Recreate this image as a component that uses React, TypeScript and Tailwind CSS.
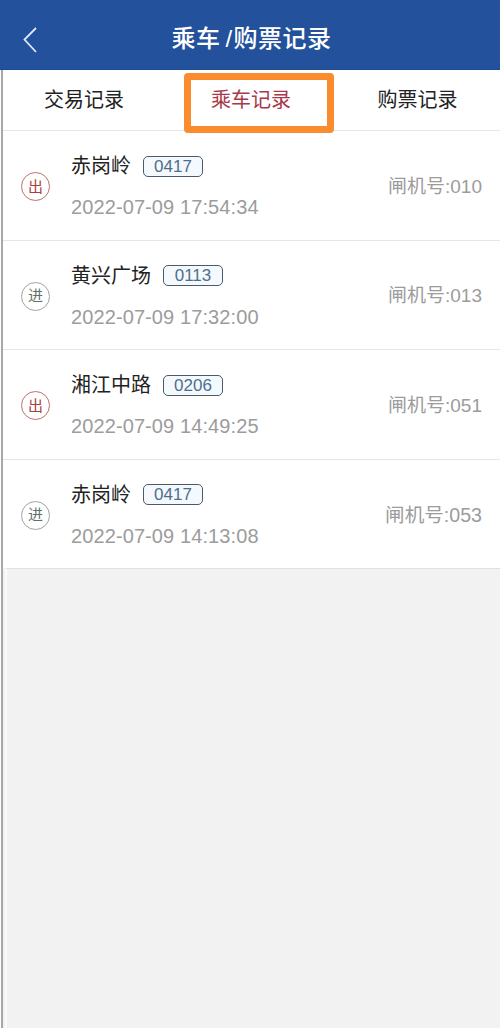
const font = { fontFamily: '"Liberation Sans", "Noto Sans CJK SC", sans-serif' };

const rows = [
  { dir: "出", name: "赤岗岭", code: "0417", time: "2022-07-09 17:54:34", gate: "闸机号:010", out: true, wide: false },
  { dir: "进", name: "黄兴广场", code: "0113", time: "2022-07-09 17:32:00", gate: "闸机号:013", out: false, wide: false },
  { dir: "出", name: "湘江中路", code: "0206", time: "2022-07-09 14:49:25", gate: "闸机号:051", out: true, wide: false },
  { dir: "进", name: "赤岗岭", code: "0417", time: "2022-07-09 14:13:08", gate: "闸机号:053", out: false, wide: true },
];

export default function App() {
  return (
    <div style={font} className="relative w-[500px] h-[1028px] bg-white overflow-hidden flex flex-col">
      <header className="h-[70px] shrink-0 bg-[#24519b] flex items-center justify-center relative pt-[9px] border-b border-[#1d4a93]">
        <svg className="absolute left-[22px] top-[26px]" width="16" height="28" viewBox="0 0 16 28" fill="none" stroke="#dfe9f8" strokeWidth="1.8">
          <path d="M14 2 L2.5 13.5 L14 26" />
        </svg>
        <h1 className="text-[24px] font-medium text-white tracking-[0.5px] ml-[3px] flex items-center">
          <span>乘车</span>
          <span className="ml-[5px] mr-[1px]">/</span>
          <span>购票记录</span>
        </h1>
      </header>

      <div className="flex-1 ml-[1px] border-l-2 border-[#a8a8a8] bg-[#f2f2f2] flex flex-col">
        <div className="bg-white">
          <nav className="h-[60px] flex items-center text-[20px]">
            <div className="w-[164px] text-center text-[#222] pr-[2px]">交易记录</div>
            <div className="w-[168px] text-center text-[#a8384a]">乘车记录</div>
            <div className="flex-1 text-center text-[#222]">购票记录</div>
          </nav>

          {rows.map((r) => (
            <div key={r.time} className="h-[109.5px] pt-[3px] flex items-center border-t-[1.5px] border-[#e6e6e6] first:border-t first:border-[#f4f4f4]">
              <div className={`w-[29px] h-[29px] ml-[18px] rounded-full border flex items-center justify-center text-[15px] shrink-0 ${r.out ? "border-[#b9716f] text-[#a8403f]" : "border-[#9aa5a3] text-[#5f6f6a]"}`}>
                {r.dir}
              </div>
              <div className="ml-[21px] flex flex-col flex-1">
                <div className="flex items-center h-[30px]">
                  <span className="text-[20px] text-[#222] leading-none">{r.name}</span>
                  <span className="ml-[12px] w-[60px] h-[21px] rounded-[5px] border border-[#4a5a6c] bg-[#f4f9fd] text-[#4f6e8c] text-[17px] leading-none flex items-center justify-center">
                    {r.code}
                  </span>
                </div>
                <div className="mt-[11px] text-[20px] tracking-[0.1px] leading-[30px] text-[#9c9c9c]">{r.time}</div>
              </div>
              <div className={`${r.wide ? "text-[19.6px]" : "text-[19px]"} text-[#9c9c9c] pr-[18px]`}>{r.gate}</div>
            </div>
          ))}
        </div>
        <div className="flex-1 ml-[2px] border-l-2 border-t-[1.5px] border-l-[#fbfbfb] border-t-[#e0e0e0]" />
      </div>

      <div className="absolute left-[184px] top-[73px] w-[150px] h-[60px] border-[7px] border-[#fb8c2e] rounded-[4px]" />
    </div>
  );
}
